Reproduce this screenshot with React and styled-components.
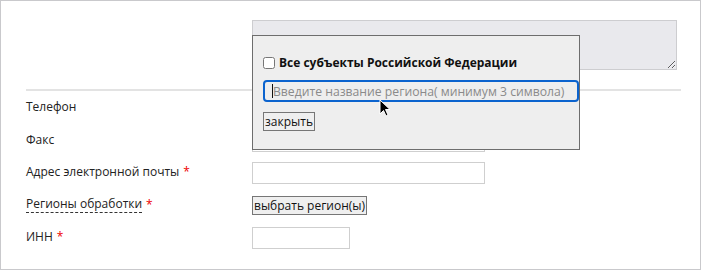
import React from "react";
import styled, { createGlobalStyle } from "styled-components";

const Global = createGlobalStyle`
  html, body { margin: 0; padding: 0; background: #fff; }
  body { font-family: "Open Sans", "Noto Sans", sans-serif; font-size: 12px; color: #222; }
`;

const Frame = styled.div`
  position: relative;
  box-sizing: border-box;
  width: 701px;
  height: 270px;
  border: 1px solid #c9c9cc;
  padding: 19px 0 0 25px;
  overflow: hidden;
`;

const TopRow = styled.div`
  display: grid;
  grid-template-columns: 226px 425px;
`;

const TextArea = styled.textarea`
  box-sizing: border-box;
  width: 425px;
  height: 50px;
  margin: 0;
  background: #e9e9ed;
  border: 1px solid #cdcdd0;
  border-radius: 0;
  resize: both;
  font: inherit;
`;

const Divider = styled.div`
  width: 655px;
  height: 2px;
  background: #e3e3e3;
  margin: 19px 0 6px;
`;

const Rows = styled.div`
  display: grid;
  grid-template-columns: 226px auto;
  grid-auto-rows: 22px;
  row-gap: 10.5px;
  align-items: center;
`;

const Label = styled.div`
  display: flex;
  align-items: center;
  gap: 4px;
  line-height: 17px;
  padding-bottom: 3px;
`;

const Dashed = styled.span`
  border-bottom: 1px dashed #333;
  line-height: 17px;
`;

const Req = styled.span`
  color: #e00;
`;

const Field = styled.input`
  box-sizing: border-box;
  width: ${(p) => p.$w}px;
  height: 22px;
  margin: 0;
  border: 1px solid #cfcfcf;
  border-radius: 0;
  background: #fff;
  font: inherit;
`;

const Btn = styled.button`
  box-sizing: border-box;
  height: 19px;
  margin: 0;
  padding: 0 1px;
  border: 1px solid #767676;
  border-radius: 0;
  background: #efefef;
  color: #111;
  font-family: "Open Sans", "Noto Sans", sans-serif;
  font-size: 12px;
  line-height: 15px;
  justify-self: start;
`;

const Popup = styled.div`
  position: absolute;
  left: 251px;
  top: 34px;
  box-sizing: border-box;
  width: 328px;
  height: 115px;
  background: #eeeeee;
  border: 1px solid #6d6d6d;
  padding: 18px 2px 0 10px;
  display: flex;
  flex-direction: column;
  align-items: flex-start;
`;

const CheckRow = styled.label`
  display: flex;
  align-items: center;
  height: 17px;
  font-weight: 700;
  color: #111;
`;

const Check = styled.input`
  width: 12px;
  height: 12px;
  margin: 0 4px 0 0;
`;

const Search = styled.input`
  box-sizing: border-box;
  width: 316px;
  height: 22px;
  margin: 9px 0 10px;
  padding: 0 8px;
  border: 2px solid #0b63ce;
  border-radius: 4px;
  background: #eeeeee;
  font-family: inherit;
  font-size: 12.2px;
  outline: none;
  &::placeholder { color: #8a8a8a; }
`;

const Caret = styled.span`
  position: absolute;
  left: 19px;
  top: 48px;
  width: 1px;
  height: 14px;
  background: #111;
`;

const Cursor = styled.svg`
  position: absolute;
  left: 378px;
  top: 98px;
`;

export default function App() {
  return (
    <>
      <Global />
      <Frame>
        <TopRow>
          <div />
          <TextArea />
        </TopRow>
        <Divider />
        <Rows>
          <Label>Телефон</Label>
          <Field $w={233} />
          <Label>Факс</Label>
          <Field $w={233} />
          <Label>
            Адрес электронной почты <Req>*</Req>
          </Label>
          <Field $w={233} />
          <Label>
            <Dashed>Регионы обработки</Dashed> <Req>*</Req>
          </Label>
          <Btn>выбрать регион(ы)</Btn>
          <Label>
            ИНН <Req>*</Req>
          </Label>
          <Field $w={98} />
        </Rows>
        <Popup>
          <CheckRow>
            <Check type="checkbox" />
            Все субъекты Российской Федерации
          </CheckRow>
          <Search placeholder="Введите название региона( минимум 3 символа)" />
          <Caret />
          <Btn>закрыть</Btn>
        </Popup>
        <Cursor width="12" height="19" viewBox="0 0 12 19">
          <path
            d="M1 1 L1 15 L4.5 11.5 L7 17 L9 16 L6.5 10.5 L11 10.5 Z"
            fill="#000"
            stroke="#fff"
            strokeWidth="1"
          />
        </Cursor>
      </Frame>
    </>
  );
}
